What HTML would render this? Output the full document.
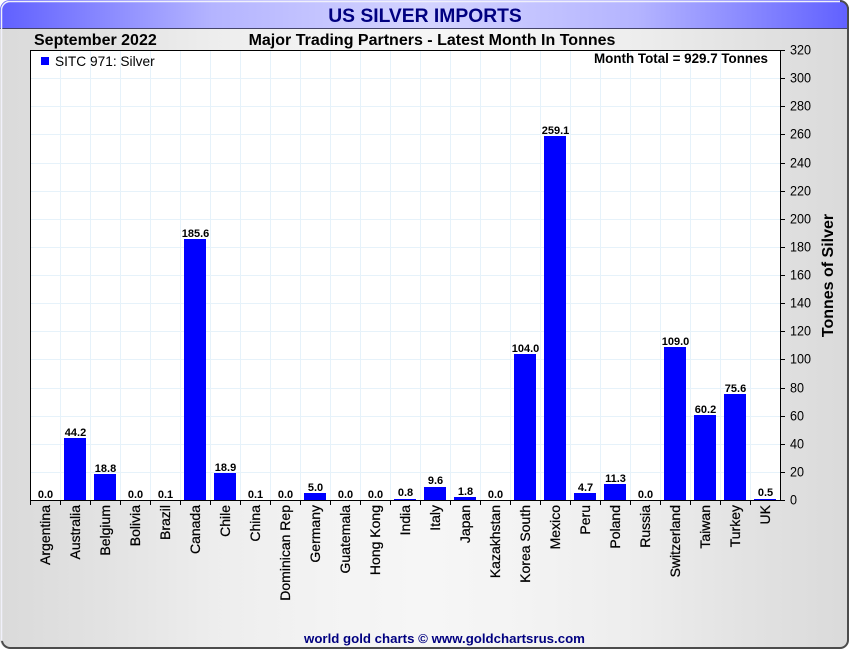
<!DOCTYPE html>
<html><head><meta charset="utf-8"><title>US Silver Imports</title>
<style>
html,body{margin:0;padding:0;background:#fff;width:850px;height:650px;overflow:hidden}
svg{display:block;font-family:"Liberation Sans",Arial,sans-serif}
.v{font-size:11px;font-weight:bold;text-anchor:middle;fill:#000}
.y{font-size:14px;fill:#000}
.c{font-size:14px;fill:#000;stroke:#000;stroke-width:.25px;text-anchor:end}
</style></head><body>
<svg width="850" height="650" viewBox="0 0 850 650" xmlns="http://www.w3.org/2000/svg">
<defs>
<linearGradient id="bg" x1="0" x2="1" y1="0" y2="0"><stop offset="0" stop-color="#dadada"/><stop offset=".12" stop-color="#e2e2e2"/><stop offset=".25" stop-color="#ededed"/><stop offset=".38" stop-color="#f3f3f3"/><stop offset=".5" stop-color="#f6f6f6"/><stop offset=".62" stop-color="#f3f3f3"/><stop offset=".75" stop-color="#ededed"/><stop offset=".88" stop-color="#e2e2e2"/><stop offset="1" stop-color="#dadada"/></linearGradient>
<linearGradient id="tb" x1="0" x2="1" y1="0" y2="0"><stop offset="0" stop-color="#6060ff"/><stop offset=".25" stop-color="#b4b4ff"/><stop offset=".5" stop-color="#d4d4ff"/><stop offset=".75" stop-color="#b4b4ff"/><stop offset="1" stop-color="#6060ff"/></linearGradient>
<clipPath id="fr"><rect x="0" y="0" width="849" height="649" rx="10"/></clipPath>
</defs>
<rect width="850" height="650" fill="#fff"/>
<g clip-path="url(#fr)">
<rect width="850" height="650" fill="url(#bg)"/>
<rect x="0" y="0" width="850" height="29" fill="url(#tb)"/>
<rect x="0" y="28" width="850" height="1" fill="#44446a" shape-rendering="crispEdges"/>
</g>
<path d="M1.500 640V10a8.500 8.500 0 0 1 8.500-8.500H840" fill="none" stroke="#f0f0fa" stroke-width="1.500"/>
<path d="M840 1a8 8 0 0 1 8 8.500V640a8 8 0 0 1-8 8H10a8.500 8.500 0 0 1-8-7" fill="none" stroke="#4c4c4c" stroke-width="2"/>
<text x="425" y="22" font-size="19.300" font-weight="bold" fill="#000080" text-anchor="middle">US SILVER IMPORTS</text>
<text x="34" y="45" font-size="16" font-weight="bold">September 2022</text>
<text x="432" y="45" font-size="16" font-weight="bold" text-anchor="middle">Major Trading Partners - Latest Month In Tonnes</text>
<rect x="30" y="50" width="751" height="451" fill="#fff"/>
<path shape-rendering="crispEdges" fill="none" stroke="#e6f2fa" stroke-width="1" d="M60.500 51V500M90.500 51V500M120.500 51V500M150.500 51V500M180.500 51V500M210.500 51V500M240.500 51V500M270.500 51V500M300.500 51V500M330.500 51V500M360.500 51V500M390.500 51V500M420.500 51V500M450.500 51V500M480.500 51V500M510.500 51V500M540.500 51V500M570.500 51V500M600.500 51V500M630.500 51V500M660.500 51V500M690.500 51V500M720.500 51V500M750.500 51V500M31 78.500H780M31 106.500H780M31 134.500H780M31 163.500H780M31 191.500H780M31 219.500H780M31 247.500H780M31 275.500H780M31 303.500H780M31 331.500H780M31 359.500H780M31 388.500H780M31 416.500H780M31 444.500H780M31 472.500H780"/>
<g fill="#0000ff" shape-rendering="crispEdges">
<rect x="64" y="438" width="22" height="62"/><rect x="94" y="474" width="22" height="26"/>
<rect x="184" y="239" width="22" height="261"/><rect x="214" y="473" width="22" height="27"/>
<rect x="304" y="493" width="22" height="7"/><rect x="394" y="499" width="22" height="1"/>
<rect x="424" y="487" width="22" height="13"/><rect x="454" y="497" width="22" height="3"/>
<rect x="514" y="354" width="22" height="146"/><rect x="544" y="136" width="22" height="364"/>
<rect x="574" y="493" width="22" height="7"/><rect x="604" y="484" width="22" height="16"/>
<rect x="664" y="347" width="22" height="153"/><rect x="694" y="415" width="22" height="85"/>
<rect x="724" y="394" width="22" height="106"/><rect x="754" y="499" width="22" height="1"/>
</g>
<path shape-rendering="crispEdges" fill="none" stroke="#000" stroke-width="1" d="M30.500 50.500H780.500V500.500H30.500ZM30.500 501V505M60.500 501V505M90.500 501V505M120.500 501V505M150.500 501V505M180.500 501V505M210.500 501V505M240.500 501V505M270.500 501V505M300.500 501V505M330.500 501V505M360.500 501V505M390.500 501V505M420.500 501V505M450.500 501V505M480.500 501V505M510.500 501V505M540.500 501V505M570.500 501V505M600.500 501V505M630.500 501V505M660.500 501V505M690.500 501V505M720.500 501V505M750.500 501V505M781 50.500H785M781 78.500H785M781 106.500H785M781 134.500H785M781 163.500H785M781 191.500H785M781 219.500H785M781 247.500H785M781 275.500H785M781 303.500H785M781 331.500H785M781 359.500H785M781 388.500H785M781 416.500H785M781 444.500H785M781 472.500H785M781 500.500H785"/>
<rect x="41" y="57" width="8" height="8" fill="#0000ff"/>
<text x="55" y="66" font-size="13.700">SITC 971: Silver</text>
<text x="768" y="63" font-size="13.400" font-weight="bold" text-anchor="end">Month Total = 929.7 Tonnes</text>
<g class="vals">
<text class="v" x="45.500" y="498">0.0</text><text class="v" x="75.500" y="436">44.2</text><text class="v" x="105.500" y="472">18.8</text><text class="v" x="135.500" y="498">0.0</text><text class="v" x="165.500" y="498">0.1</text><text class="v" x="195.500" y="237">185.6</text><text class="v" x="225.500" y="471">18.9</text><text class="v" x="255.500" y="498">0.1</text><text class="v" x="285.500" y="498">0.0</text><text class="v" x="315.500" y="491">5.0</text><text class="v" x="345.500" y="498">0.0</text><text class="v" x="375.500" y="498">0.0</text><text class="v" x="405.500" y="496">0.8</text><text class="v" x="435.500" y="484">9.6</text><text class="v" x="465.500" y="495">1.8</text><text class="v" x="495.500" y="498">0.0</text><text class="v" x="525.500" y="352">104.0</text><text class="v" x="555.500" y="134">259.1</text><text class="v" x="585.500" y="491">4.7</text><text class="v" x="615.500" y="482">11.3</text><text class="v" x="645.500" y="498">0.0</text><text class="v" x="675.500" y="345">109.0</text><text class="v" x="705.500" y="413">60.2</text><text class="v" x="735.500" y="392">75.6</text><text class="v" x="765.500" y="496">0.5</text>
</g>
<g class="ys" transform="translate(790,0) scale(.9,1)">
<text class="y" x="0" y="54.500">320</text><text class="y" x="0" y="82.500">300</text><text class="y" x="0" y="110.500">280</text><text class="y" x="0" y="138.500">260</text><text class="y" x="0" y="167.500">240</text><text class="y" x="0" y="195.500">220</text><text class="y" x="0" y="223.500">200</text><text class="y" x="0" y="251.500">180</text><text class="y" x="0" y="279.500">160</text><text class="y" x="0" y="307.500">140</text><text class="y" x="0" y="335.500">120</text><text class="y" x="0" y="363.500">100</text><text class="y" x="0" y="392.500">80</text><text class="y" x="0" y="420.500">60</text><text class="y" x="0" y="448.500">40</text><text class="y" x="0" y="476.500">20</text><text class="y" x="0" y="504.500">0</text>
</g>
<g class="cats">
<text class="c" transform="translate(50,505) rotate(-90)" x="0" y="0">Argentina</text>
<text class="c" transform="translate(80,505) rotate(-90)" x="0" y="0">Australia</text>
<text class="c" transform="translate(110,505) rotate(-90)" x="0" y="0">Belgium</text>
<text class="c" transform="translate(140,505) rotate(-90)" x="0" y="0">Bolivia</text>
<text class="c" transform="translate(170,505) rotate(-90)" x="0" y="0">Brazil</text>
<text class="c" transform="translate(200,505) rotate(-90)" x="0" y="0">Canada</text>
<text class="c" transform="translate(230,505) rotate(-90)" x="0" y="0">Chile</text>
<text class="c" transform="translate(260,505) rotate(-90)" x="0" y="0">China</text>
<text class="c" transform="translate(290,505) rotate(-90)" x="0" y="0">Dominican Rep</text>
<text class="c" transform="translate(320,505) rotate(-90)" x="0" y="0">Germany</text>
<text class="c" transform="translate(350,505) rotate(-90)" x="0" y="0">Guatemala</text>
<text class="c" transform="translate(380,505) rotate(-90)" x="0" y="0">Hong Kong</text>
<text class="c" transform="translate(410,505) rotate(-90)" x="0" y="0">India</text>
<text class="c" transform="translate(440,505) rotate(-90)" x="0" y="0">Italy</text>
<text class="c" transform="translate(470,505) rotate(-90)" x="0" y="0">Japan</text>
<text class="c" transform="translate(500,505) rotate(-90)" x="0" y="0">Kazakhstan</text>
<text class="c" transform="translate(530,505) rotate(-90)" x="0" y="0">Korea South</text>
<text class="c" transform="translate(560,505) rotate(-90)" x="0" y="0">Mexico</text>
<text class="c" transform="translate(590,505) rotate(-90)" x="0" y="0">Peru</text>
<text class="c" transform="translate(620,505) rotate(-90)" x="0" y="0">Poland</text>
<text class="c" transform="translate(650,505) rotate(-90)" x="0" y="0">Russia</text>
<text class="c" transform="translate(680,505) rotate(-90)" x="0" y="0">Switzerland</text>
<text class="c" transform="translate(710,505) rotate(-90)" x="0" y="0">Taiwan</text>
<text class="c" transform="translate(740,505) rotate(-90)" x="0" y="0">Turkey</text>
<text class="c" transform="translate(770,505) rotate(-90)" x="0" y="0">UK</text>
</g>
<text transform="translate(833,275.500) rotate(-90)" font-size="16" font-weight="bold" text-anchor="middle">Tonnes of Silver</text>
<text x="444.500" y="643" font-size="13.250" font-weight="bold" fill="#000080" text-anchor="middle">world gold charts © www.goldchartsrus.com</text>
</svg>
</body></html>
